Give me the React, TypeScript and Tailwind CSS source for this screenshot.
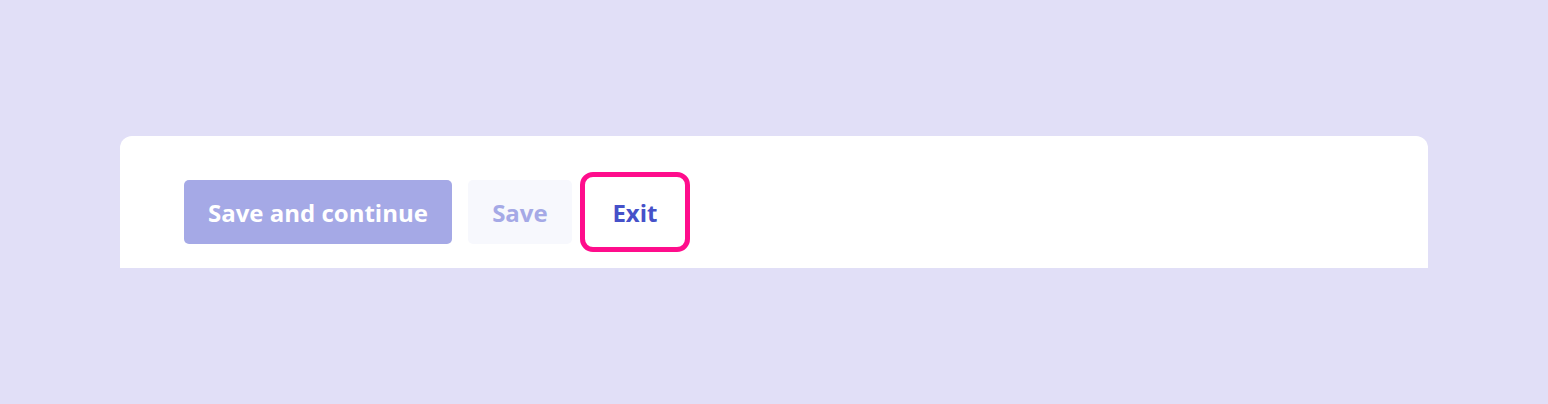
export default function App() {
  return (
    <div className="min-h-screen w-full bg-[#e1dff7] pt-[136px] px-[120px] font-['Open_Sans','Noto_Sans',sans-serif]">
      <div className="bg-white rounded-t-xl pl-16 pt-11 pb-6 flex items-center gap-4">
        <button className="h-16 px-6 pt-0.5 rounded-[5px] bg-[#a5a9e6] text-white text-[24px] font-bold">
          Save and continue
        </button>
        <button className="h-16 w-[104px] pt-0.5 rounded-[5px] bg-[#f7f8fd] text-[#a5a9e6] text-[24px] font-bold">
          Save
        </button>
        <button className="h-16 w-[94px] pt-0.5 rounded-[5px] bg-white text-[#4651c9] text-[24px] font-bold outline-[5px] outline-solid outline-[#ff0d8c] outline-offset-[3px]">
          Exit
        </button>
      </div>
    </div>
  );
}
